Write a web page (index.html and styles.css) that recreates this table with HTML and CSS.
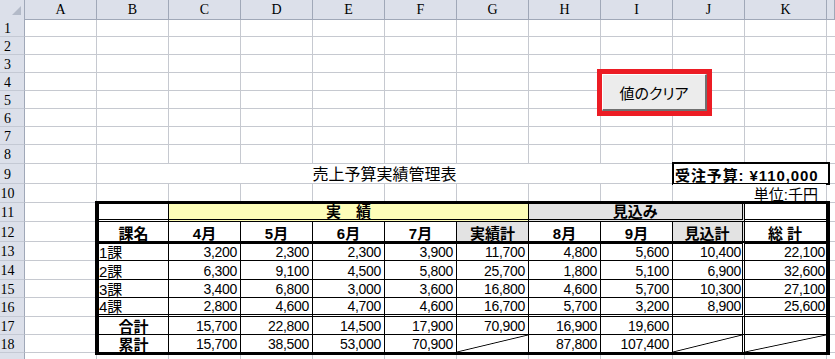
FILE: index.html
```html
<!DOCTYPE html>
<html lang="ja">
<head>
<meta charset="utf-8">
<title>売上予算実績管理表</title>
<link rel="stylesheet" href="styles.css">
</head>
<body>
<div class="sheet">
  <div class="row colhead">
    <div class="corner"><svg width="24" height="18" viewBox="0 0 24 18"><polygon points="21,6 21,15 12,15" fill="#b3bac8"/></svg></div>
    <div class="ch">A</div><div class="ch">B</div><div class="ch">C</div><div class="ch">D</div><div class="ch">E</div><div class="ch">F</div><div class="ch">G</div><div class="ch">H</div><div class="ch">I</div><div class="ch">J</div><div class="ch">K</div><div class="ch"></div>
  </div>
  <div class="row"><div class="rh">1</div></div>
  <div class="row"><div class="rh">2</div></div>
  <div class="row"><div class="rh">3</div></div>
  <div class="row"><div class="rh">4</div></div>
  <div class="row"><div class="rh">5</div></div>
  <div class="row"><div class="rh">6</div></div>
  <div class="row"><div class="rh">7</div></div>
  <div class="row h19"><div class="rh">8</div></div>
  <div class="row h20"><div class="rh">9</div><div class="title">売上予算実績管理表</div><div class="budget">受注予算: ¥110,000</div></div>
  <div class="row h19"><div class="rh">10</div><div class="unit">単位:千円</div></div>
  <div class="band">
    <div class="rh">11</div><div class="a"></div><div class="l"></div>
    <div class="rh">12</div><div class="a"></div><div class="l"></div>
    <div class="rh">13</div><div class="a"></div><div class="l"></div>
    <div class="rh">14</div><div class="a"></div><div class="l"></div>
    <div class="rh">15</div><div class="a"></div><div class="l"></div>
    <div class="rh">16</div><div class="a"></div><div class="l"></div>
    <div class="rh">17</div><div class="a"></div><div class="l"></div>
    <div class="rh">18</div><div class="a"></div><div class="l"></div>
    <div class="report">
      <div class="c dblb"></div>
      <div class="c dblb span5 yel ctr">実　績</div>
      <div class="c dblb span3 gry ctr jc">見込み</div>
      <div class="c dblb kc"></div>

      <div class="c ctr">課名</div>
      <div class="c ctr">4月</div>
      <div class="c ctr">5月</div>
      <div class="c ctr">6月</div>
      <div class="c ctr">7月</div>
      <div class="c ctr gry">実績計</div>
      <div class="c ctr">8月</div>
      <div class="c ctr">9月</div>
      <div class="c ctr gry jc">見込計</div>
      <div class="c ctr kc">総 計</div>

      <div class="c thk">1課</div>
      <div class="c thk num">3,200</div>
      <div class="c thk num">2,300</div>
      <div class="c thk num">2,300</div>
      <div class="c thk num">3,900</div>
      <div class="c thk num">11,700</div>
      <div class="c thk num">4,800</div>
      <div class="c thk num">5,600</div>
      <div class="c thk num jc">10,400</div>
      <div class="c thk num kc">22,100</div>

      <div class="c">2課</div>
      <div class="c num">6,300</div>
      <div class="c num">9,100</div>
      <div class="c num">4,500</div>
      <div class="c num">5,800</div>
      <div class="c num">25,700</div>
      <div class="c num">1,800</div>
      <div class="c num">5,100</div>
      <div class="c num jc">6,900</div>
      <div class="c num kc">32,600</div>

      <div class="c">3課</div>
      <div class="c num">3,400</div>
      <div class="c num">6,800</div>
      <div class="c num">3,000</div>
      <div class="c num">3,600</div>
      <div class="c num">16,800</div>
      <div class="c num">4,600</div>
      <div class="c num">5,700</div>
      <div class="c num jc">10,300</div>
      <div class="c num kc">27,100</div>

      <div class="c dblb">4課</div>
      <div class="c dblb num">2,800</div>
      <div class="c dblb num">4,600</div>
      <div class="c dblb num">4,700</div>
      <div class="c dblb num">4,600</div>
      <div class="c dblb num">16,700</div>
      <div class="c dblb num">5,700</div>
      <div class="c dblb num">3,200</div>
      <div class="c dblb num jc">8,900</div>
      <div class="c dblb num kc">25,600</div>

      <div class="c ctr">合計</div>
      <div class="c num">15,700</div>
      <div class="c num">22,800</div>
      <div class="c num">14,500</div>
      <div class="c num">17,900</div>
      <div class="c num">70,900</div>
      <div class="c num">16,900</div>
      <div class="c num">19,600</div>
      <div class="c jc"></div>
      <div class="c kc"></div>

      <div class="c nob ctr">累計</div>
      <div class="c nob num">15,700</div>
      <div class="c nob num">38,500</div>
      <div class="c nob num">53,000</div>
      <div class="c nob num">70,900</div>
      <div class="c nob diag"></div>
      <div class="c nob num">87,800</div>
      <div class="c nob num">107,400</div>
      <div class="c nob jc diag"></div>
      <div class="c nob kc diag"></div>
    </div>
  </div>
  <div class="row last"><div class="rh"></div></div>
  <div class="btn-frame"><button class="btn" type="button">値のクリア</button></div>
</div>
</body>
</html>
```

FILE: styles.css
```css
:root {
  --grid: #c6c9d0;
  --hdr: #dce0ea;
  --hdr-line: #a0a8b8;
  --hdr-sep: #c4c9d4;
}
* { box-sizing: border-box; }
html, body { margin: 0; padding: 0; background: #fff; }
body {
  font-family: "Liberation Sans", "Noto Sans CJK JP", sans-serif;
  color: #000;
}
.sheet {
  position: relative;
  width: 835px;
  height: 359px;
  overflow: hidden;
}
.row {
  display: grid;
  grid-template-columns: 25px repeat(10, 72px) 82px 1fr;
  height: 18px;
  background:
    linear-gradient(var(--grid), var(--grid)) 0 100% / 100% 1px no-repeat,
    repeating-linear-gradient(to right, transparent 0 71px, var(--grid) 71px 72px) 25px 0 / 720px 100% no-repeat,
    linear-gradient(var(--grid), var(--grid)) 826px 0 / 1px 100% no-repeat;
}
.row.h19 { height: 19px; }
.row.h20 { height: 20px; }
.row.last { height: 20px; }
.colhead { height: 19px; background: none; }
.corner, .ch {
  background: var(--hdr);
  border-right: 1px solid var(--hdr-line);
  border-bottom: 1px solid var(--hdr-line);
}
.corner svg { display: block; }
.ch {
  font: 14px/18px "Liberation Serif", serif;
  text-align: center;
  padding-top: 1px;
}
.rh {
  grid-column: 1;
  background: var(--hdr);
  border-right: 1px solid var(--hdr-line);
  border-bottom: 1px solid var(--hdr-sep);
  font: 14px/14px "Liberation Serif", serif;
  display: flex;
  align-items: center;
  justify-content: center;
  padding: 2px 9px 0 0;
}
.title {
  grid-column: 3 / 11;
  margin: 0 1px 1px 0;
  background: #fff;
  display: flex;
  justify-content: center;
  align-items: flex-end;
  font-size: 16px;
  line-height: 16px;
}
.budget {
  grid-column: 11 / 13;
  margin: -2px -3px -1px -1px;
  border: 2px solid #000;
  background: #fff;
  display: flex;
  align-items: flex-end;
  padding-left: 1px;
  font-size: 15px;
  font-weight: bold;
  line-height: 15px;
  letter-spacing: 0.9px;
  white-space: nowrap;
}
.unit {
  grid-column: 11 / 13;
  margin: 0 1px 1px 0;
  background: #fff;
  display: flex;
  justify-content: flex-end;
  align-items: flex-end;
  padding-right: 8px;
  font-size: 15px;
  line-height: 15px;
}
.band {
  display: grid;
  grid-template-columns: 25px 72px 730px 1fr;
  grid-template-rows: 19px 20px 19px 19px 18px 19px 18px 18px;
}
.band .a {
  grid-column: 2;
  border-right: 1px solid var(--grid);
  border-bottom: 1px solid var(--grid);
}
.band .l {
  grid-column: 4;
  border-bottom: 1px solid var(--grid);
}
.report {
  grid-column: 3;
  grid-row: 1 / -1;
  margin: -2px -3px -2px -2px;
  border-style: solid;
  border-color: #000;
  border-width: 3px 4px 3px 4px;
  background: #fff;
  position: relative;
  z-index: 1;
  display: grid;
  grid-template-columns: 70px repeat(8, 72px) 81px;
  grid-template-rows: 18px 20px 19px 19px 18px 19px 18px 17px;
  font-size: 15px;
}
.c {
  display: flex;
  align-items: flex-end;
  border-right: 1px solid #000;
  border-bottom: 1px solid #000;
  padding: 0 3px 0 0;
  line-height: 15px;
  white-space: nowrap;
  overflow: hidden;
  font-feature-settings: "palt";
}
.ctr { justify-content: center; font-weight: bold; padding-right: 0; }
.num {
  justify-content: flex-end;
  font-size: 14px;
  letter-spacing: -0.3px;
}
.span5 { grid-column: span 5; }
.span3 { grid-column: span 3; }
.yel { background: #fdfdb8; }
.gry { background: #e3e3e3; }
.jc { border-right: 3px double #000; padding-right: 1px; }
.kc { border-right: none; padding-right: 1px; }
.dblb { border-bottom: 3px double #000; }
.thk { border-top: 2px solid #000; }
.nob { border-bottom: none; }
.diag {
  background: linear-gradient(to bottom right, transparent calc(50% - 0.9px), #000 50%, transparent calc(50% + 0.9px)) no-repeat;
}
.btn-frame {
  position: absolute;
  left: 597px;
  top: 69px;
  width: 115px;
  height: 47px;
  border: 5px solid #ec1c24;
  display: flex;
}
.btn {
  flex: 1;
  margin: 0;
  padding: 0;
  border-style: solid;
  border-width: 1px 2px 2px 1px;
  border-color: #fff #707070 #707070 #fff;
  background: #ececec;
  font: 15px "Noto Sans CJK JP", sans-serif;
  font-feature-settings: "palt";
  color: #000;
}
```
